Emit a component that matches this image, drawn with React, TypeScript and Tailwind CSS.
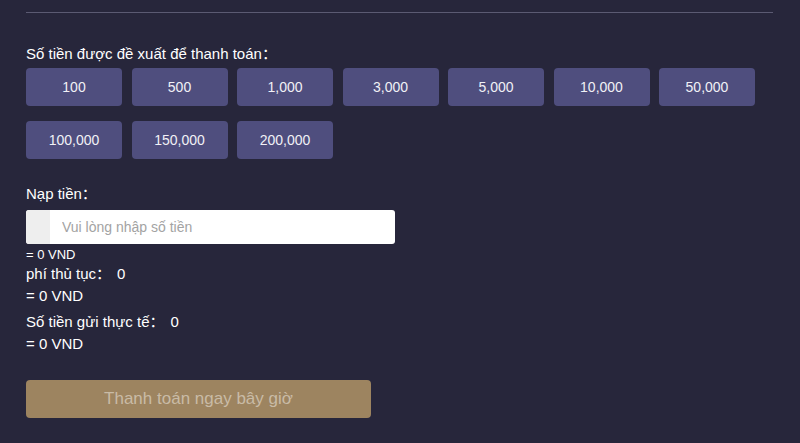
const amounts = ["100", "500", "1,000", "3,000", "5,000", "10,000", "50,000", "100,000", "150,000", "200,000"];

export default function App() {
  return (
    <div className="h-[443px] w-[800px] bg-[#27263b] px-[26px] pt-[12px] text-white font-['Liberation_Sans','Noto_Sans_CJK_SC',Arial,sans-serif]">
      <div className="mr-[1px] h-px bg-[#5b5a72]" />

      <p className="mt-[32px] text-[15px] leading-[17px]">Số tiền được đề xuất để thanh toán：</p>

      <div className="mt-[6px] flex w-[740px] flex-wrap gap-x-[9.5px] gap-y-[15px]">
        {amounts.map((a) => (
          <button
            key={a}
            className="flex h-[38px] w-[96px] items-center justify-center rounded-[4px] bg-[#4f4e7e] text-[14px] text-[#f1f1f6]"
          >
            {a}
          </button>
        ))}
      </div>

      <p className="mt-[26px] text-[15px] leading-[17px]">Nạp tiền：</p>

      <div className="mt-[8px] flex h-[34px] w-[369px] overflow-hidden rounded-[3px] bg-white">
        <div className="w-[24px] bg-[#eeeeee]" />
        <input
          className="flex-1 px-[12px] text-[14px] text-gray-700 outline-none placeholder:text-[#a3a3a3]"
          placeholder="Vui lòng nhập số tiền"
        />
      </div>

      <p className="mt-[3px] text-[13px] leading-[15px]">= 0 VND</p>
      <p className="mt-[2px] text-[15px] leading-[20px]">
        phí thủ tục：<span className="ml-[6px]">0</span>
      </p>
      <p className="mt-[2px] text-[15px] leading-[20px]">= 0 VND</p>
      <p className="mt-[6px] text-[15px] leading-[20px]">
        Số tiền gửi thực tế：<span className="ml-[6px]">0</span>
      </p>
      <p className="mt-[2px] text-[15px] leading-[20px]">= 0 VND</p>

      <button className="mt-[26px] flex h-[38px] w-[345px] items-center justify-center rounded-[4px] bg-[#9d8460] text-[17px] text-[#c9bba6]">
        Thanh toán ngay bây giờ
      </button>
    </div>
  );
}
